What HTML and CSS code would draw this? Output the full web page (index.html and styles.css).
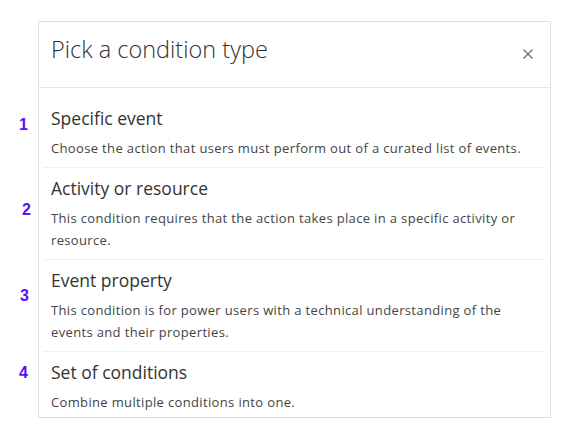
FILE: index.html
```html
<!DOCTYPE html>
<html lang="en">
<head>
<meta charset="utf-8">
<title>Pick a condition type</title>
<link rel="stylesheet" href="styles.css">
</head>
<body>
<div class="panel">
  <div class="panel-header">
    <h1 class="panel-title">Pick a condition type</h1>
    <button class="close" aria-label="Close">
      <svg width="10" height="10" viewBox="0 0 10 10"><path d="M0.5 0.5 L9.5 9.5 M9.5 0.5 L0.5 9.5" stroke="#6b6b6b" stroke-width="1.3" fill="none"/></svg>
    </button>
  </div>
  <ul class="options">
    <li class="option">
      <span class="marker marker-1">1</span>
      <div class="option-title">Specific event</div>
      <div class="option-desc">Choose the action that users must perform out of a curated list of events.</div>
    </li>
    <li class="option">
      <span class="marker marker-2">2</span>
      <div class="option-title">Activity or resource</div>
      <div class="option-desc">This condition requires that the action takes place in a specific activity or resource.</div>
    </li>
    <li class="option">
      <span class="marker marker-3">3</span>
      <div class="option-title">Event property</div>
      <div class="option-desc">This condition is for power users with a technical understanding of the events and their properties.</div>
    </li>
    <li class="option">
      <span class="marker marker-4">4</span>
      <div class="option-title">Set of conditions</div>
      <div class="option-desc">Combine multiple conditions into one.</div>
    </li>
  </ul>
</div>
</body>
</html>
```
FILE: styles.css
```css
* { box-sizing: border-box; }
html, body { margin: 0; padding: 0; background: #fff; }
body {
  font-family: "Open Sans", "Noto Sans", "Liberation Sans", sans-serif;
  color: #333;
}
.panel {
  margin: 21px 0 0 38px;
  width: 513px;
  border: 1px solid #dedede;
  background: #fff;
}
.panel-header {
  height: 66px;
  border-bottom: 1px solid #e6e6e6;
  display: flex;
  align-items: flex-start;
  justify-content: space-between;
  padding: 11px 17px 0 12px;
}
.panel-title {
  margin: 0;
  font-size: 23.5px;
  line-height: 32px;
  font-weight: 300;
  color: #323232;
}
.close {
  margin-top: 16px;
  width: 10px;
  height: 10px;
  padding: 0;
  border: 0;
  background: none;
  display: flex;
}
.options {
  list-style: none;
  margin: 0;
  padding: 10px 4px 0 4px;
}
.option {
  position: relative;
  padding: 7px 8px 8px 8px;
  border-bottom: 1px solid #f0f0f0;
}
.option:last-child {
  border-bottom: 0;
  padding-bottom: 4px;
}
.option-title {
  font-size: 17.5px;
  line-height: 26px;
  color: #333;
  margin-bottom: 6px;
}
.option-desc {
  font-size: 13px;
  letter-spacing: 0.35px;
  line-height: 22px;
  color: #444;
}
.marker {
  position: absolute;
  font-family: "Liberation Sans", Arial, sans-serif;
  font-weight: bold;
  font-size: 16px;
  line-height: 16px;
  color: #5a0ff7;
}
.marker-1 { left: -24px; top: 19px; }
.marker-2 { left: -21px; top: 34px; }
.marker-3 { left: -23px; top: 28px; }
.marker-4 { left: -24px; top: 13px; }
```
